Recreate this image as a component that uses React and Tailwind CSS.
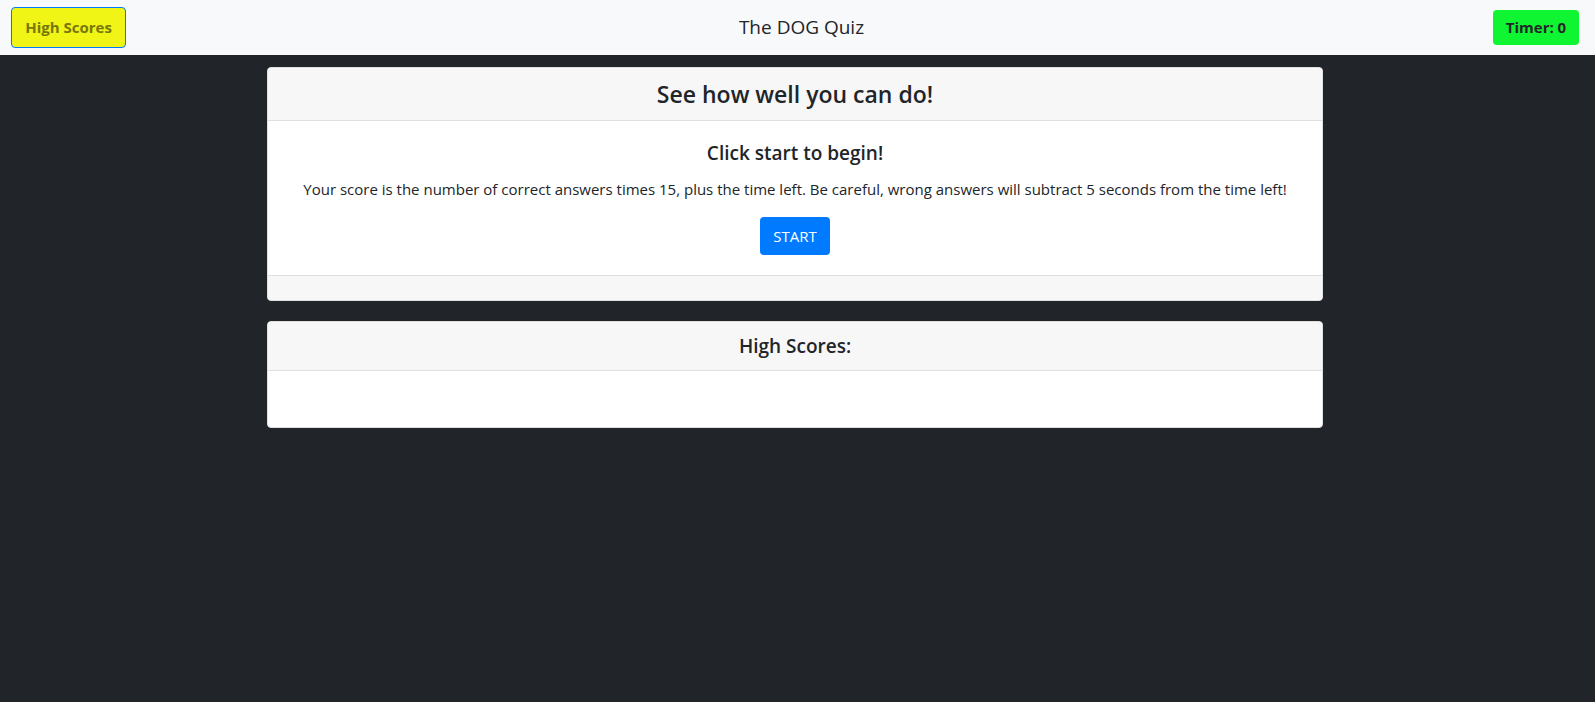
export default function App() {
  const font = { fontFamily: '"Open Sans", "Noto Sans", sans-serif' }

  return (
    <div className="min-h-screen bg-[#212428] text-[#212529]" style={font}>
      <nav className="h-[55px] bg-[#f8f9fa] grid grid-cols-3 items-center pl-[11px] pr-[16px]">
        <div>
          <button className="h-[41px] w-[115px] rounded-[4px] border border-[#007bff] bg-[#f0f516] text-[15px] font-bold text-[#77770a]">
            High Scores
          </button>
        </div>
        <div className="text-center text-[19px] text-[#212529] pl-[13px]">The DOG Quiz</div>
        <div className="flex justify-end">
          <span className="h-[35px] w-[86px] rounded-[4px] bg-[#0ff532] flex items-center justify-center text-[15px] font-bold text-[#212529]">
            Timer: 0
          </span>
        </div>
      </nav>

      <main className="w-[1056px] ml-[267px] pt-[12px]">
        <section className="bg-white rounded-[4px] border border-[#dfdfdf] overflow-hidden">
          <header className="bg-[#f7f7f7] border-b border-[#dfdfdf] py-[12px] text-center">
            <h2 className="text-[23px] leading-[28px] font-semibold">See how well you can do!</h2>
          </header>
          <div className="px-[20px] py-[20px] text-center">
            <h5 className="text-[19px] leading-[24px] font-semibold mb-[12px]">Click start to begin!</h5>
            <p className="text-[15px] leading-[24px] mb-[16px]">
              Your score is the number of correct answers times 15, plus the time left. Be careful, wrong answers will subtract 5 seconds from the time left!
            </p>
            <button className="h-[38px] w-[70px] rounded-[4px] bg-[#007bff] text-white text-[15px]">START</button>
          </div>
          <footer className="h-[25px] bg-[#f7f7f7] border-t border-[#dfdfdf]" />
        </section>

        <section className="mt-[20px] bg-white rounded-[4px] border border-[#dfdfdf] overflow-hidden">
          <header className="bg-[#f7f7f7] border-b border-[#dfdfdf] py-[12px] text-center">
            <h4 className="text-[19px] leading-[24px] font-semibold">High Scores:</h4>
          </header>
          <div className="h-[56px]" />
        </section>
      </main>
    </div>
  )
}
